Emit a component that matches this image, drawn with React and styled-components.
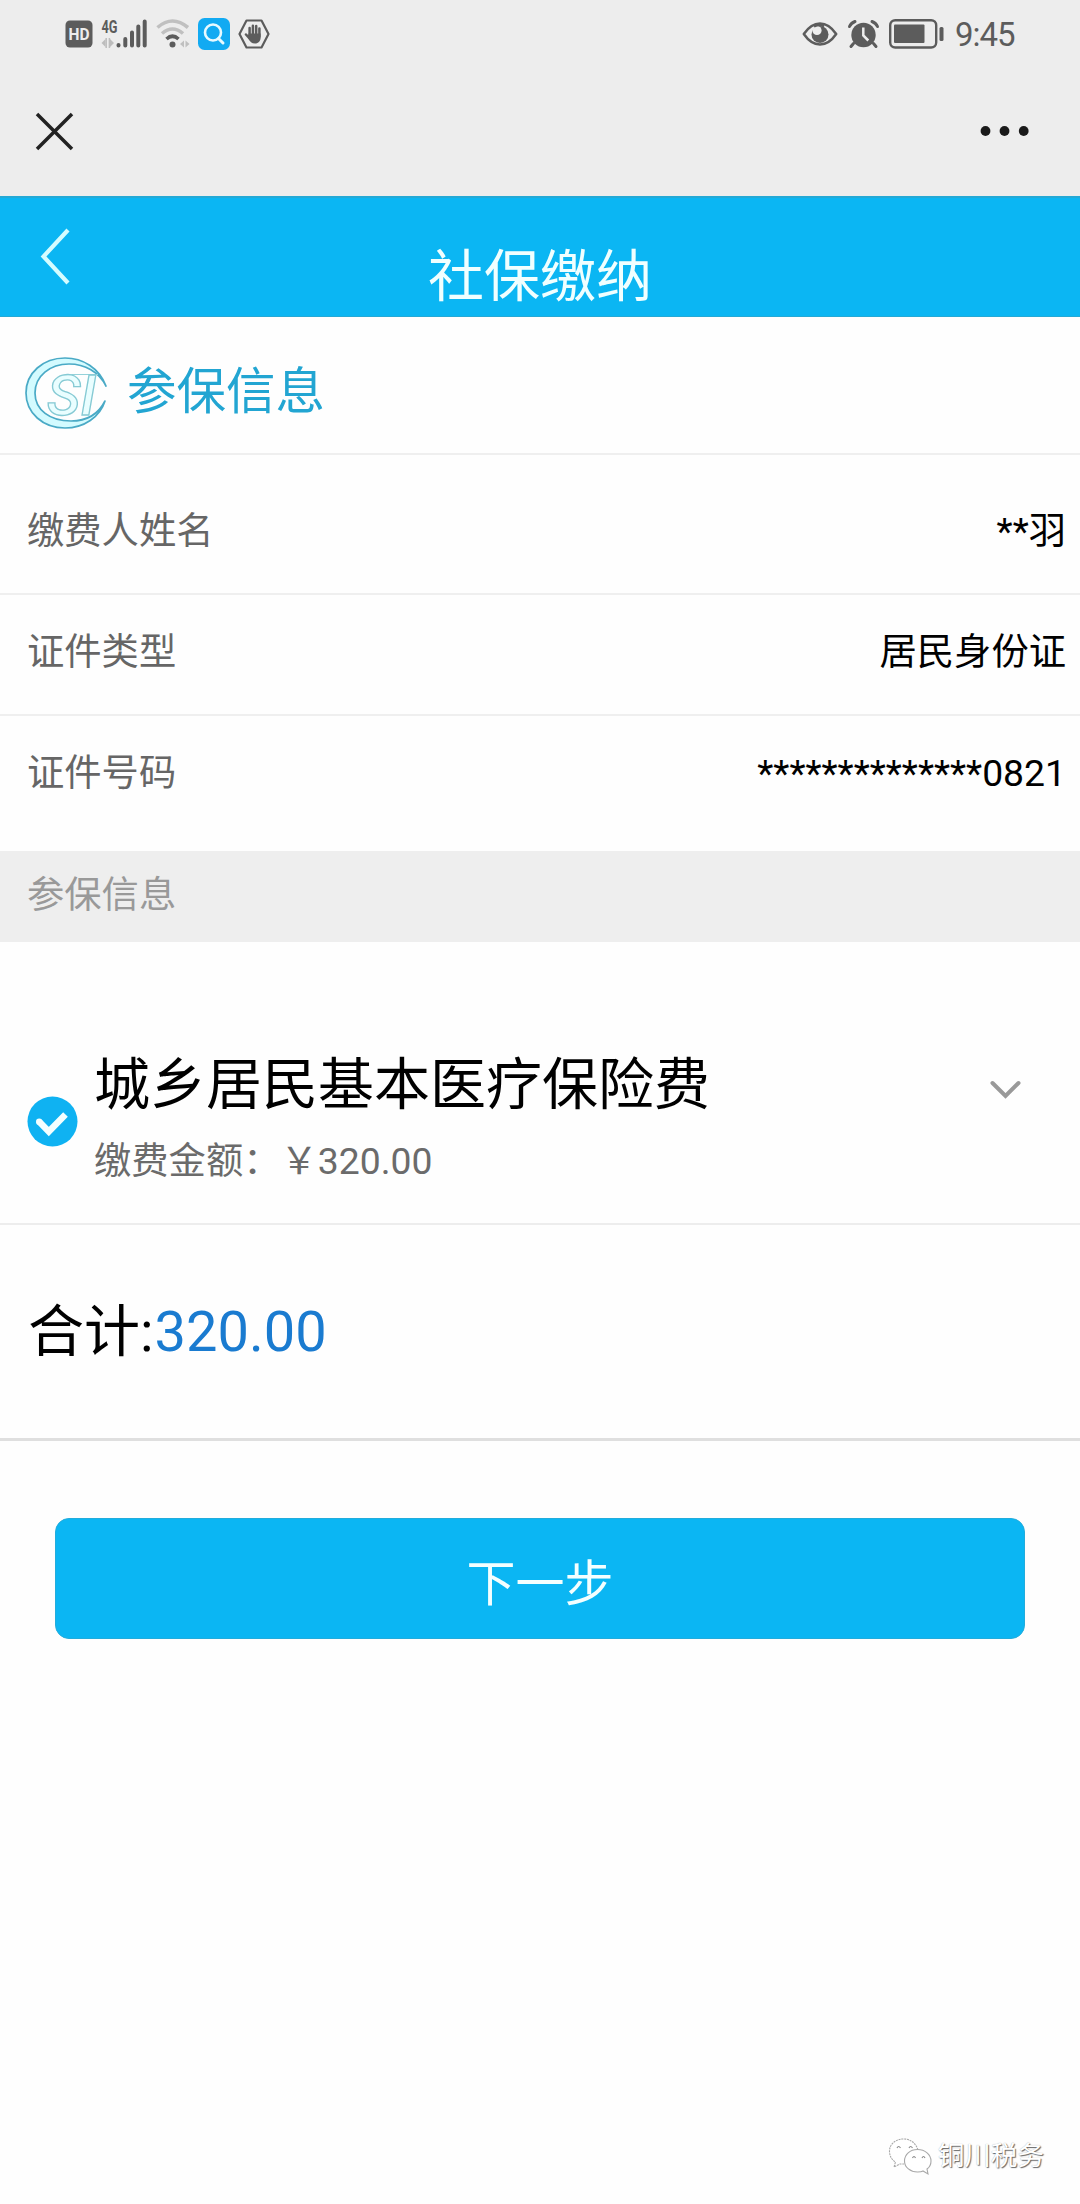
import React, { useState } from "react";
import styled, { createGlobalStyle } from "styled-components";

const GlobalStyle = createGlobalStyle`
  * {
    box-sizing: border-box;
  }

  body {
    margin: 0;
    background: #fefefe;
    font-family: Roboto, "Noto Sans CJK SC", sans-serif;
  }

  svg {
    display: block;
    flex: none;
    overflow: visible;
  }
`;

const Page = styled.div`
  display: flex;
  flex-direction: column;
  width: 1080px;
  height: 2204px;
  overflow: hidden;
  color: #000;
`;

const StatusBar = styled.div`
  display: flex;
  justify-content: space-between;
  align-items: center;
  height: 66px;
  padding: 1px 65px 0;
  background: #ededed;
`;

const StatusGroup = styled.div`
  display: flex;
  align-items: center;
  gap: ${props => props.$gap};
`;

const Time = styled.span`
  width: 60px;
  margin: 3px 0 0 1px;
  color: #5c5c5c;
  font-size: 33px;
  line-height: 40px;
  letter-spacing: -1px;
  white-space: nowrap;
`;

const NavBar = styled.div`
  display: flex;
  justify-content: space-between;
  height: 130px;
  padding: 46px 51px 0 35px;
  background: #ededed;
`;

const Header = styled.header`
  display: grid;
  grid-template-columns: 120px 1fr 120px;
  height: 121px;
  background: #0bb6f3;
  border-top: 2px solid #25a9d5;
  border-bottom: 1px solid #25a9d5;
`;

const Back = styled.div`
  padding: 29px 0 0 40px;
`;

const Title = styled.h1`
  margin: 0;
  padding-top: 39px;
  color: #f0ffff;
  font-size: 56px;
  font-weight: 400;
  line-height: 80px;
  text-align: center;
`;

const SectionHead = styled.div`
  display: flex;
  align-items: center;
  height: 138px;
  padding: 16px 0 0 24px;
  gap: 18px;
  border-bottom: 2px solid #efefef;
`;

const SectionTitle = styled.h2`
  margin: 0 0 2px;
  color: #22a5d2;
  font-size: 49.5px;
  font-weight: 400;
  line-height: 60px;
`;

const Row = styled.div`
  display: flex;
  justify-content: space-between;
  height: ${props => props.$height};
  padding: ${props => props.$top} 14px 0 27px;
  font-size: 37.3px;
  line-height: 50px;
  border-bottom: ${props => (props.$last ? "none" : "2px solid #efefef")};
`;

const Label = styled.span`
  color: #666;
`;

const GroupLabel = styled.div`
  height: 91px;
  padding: 19px 27px 0;
  background: #eee;
  color: #999;
  font-size: 37.3px;
  line-height: 50px;
`;

const Item = styled.div`
  display: flex;
  height: 283px;
  padding-left: 27px;
  border-bottom: 2px solid #ededed;
`;

const Check = styled.div`
  padding-top: 154px;
`;

const ItemText = styled.div`
  flex: 1;
  padding: 107px 0 0 16px;
`;

const ItemName = styled.div`
  font-size: 56px;
  line-height: 72px;
`;

const ItemAmount = styled.div`
  margin-top: 15px;
  color: #6b6b6b;
  font-size: 37.3px;
  line-height: 50px;
`;

const Toggle = styled.div`
  padding: 138px 59px 0 0;
`;

const Total = styled.div`
  height: 216px;
  padding: 67px 28px 0;
  font-size: 56px;
  line-height: 80px;
  border-bottom: 3px solid #dfdfdf;
`;

const Amount = styled.span`
  margin-left: 1px;
  color: #1a7bd0;
`;

const NextButton = styled.button`
  height: 121px;
  margin: 77px 55px 0;
  padding: 12px 0 0;
  background: #0bb6f3;
  border: 1px solid #22acdc;
  border-radius: 14px;
  color: #f4ffff;
  font-family: inherit;
  font-size: 49px;
  line-height: 107px;
`;

const Watermark = styled.footer`
  display: flex;
  align-items: center;
  justify-content: flex-end;
  gap: 6px;
  margin: auto 36px 28px 0;
  color: #fff;
  font-size: 26.6px;
  line-height: 40px;
  text-shadow: 1px 1px 1px #666, 0 0 1px #aaa;
`;

const HdIcon = () => (
  <svg width="28" height="28" viewBox="0 0 28 28">
    <rect x="0.5" y="0.5" width="27" height="27" rx="4.5" fill="#5c5c5c" />
    <text
      x="14"
      y="20"
      textAnchor="middle"
      textLength="21"
      lengthAdjust="spacingAndGlyphs"
      fontFamily="Roboto"
      fontWeight="700"
      fontSize="17"
      fill="#ededed"
    >
      HD
    </text>
  </svg>
);

const SignalIcon = () => (
  <svg width="47" height="30" viewBox="0 0 47 30">
    <text
      x="0.5"
      y="13.5"
      textLength="16"
      lengthAdjust="spacingAndGlyphs"
      fontFamily="Roboto"
      fontWeight="700"
      fontSize="17.5"
      fill="#5c5c5c"
    >
      4G
    </text>
    <path d="M0.500 24l4-4v8zM13 24l-4-4v8z" fill="#bdbdbd" />
    <path d="M5.200 19v10M8.400 19v10" stroke="#bdbdbd" strokeWidth="1.500" />
    <g stroke="#5c5c5c" strokeWidth="4" strokeLinecap="round">
      <path d="M17.500 26v0.500M24.300 20v6.500M31 13.500v13M37.300 7.500v19M43.700 2.500v24" />
    </g>
  </svg>
);

const WifiIcon = () => (
  <svg width="34" height="30" viewBox="0 0 34 30">
    <g fill="none" strokeWidth="3.600">
      <path d="M1.500 8.500Q16.500-4.500 32 8.500" stroke="#c0c0c0" />
      <path d="M6 14.500Q16.500 5.500 27 14.500" stroke="#c0c0c0" />
      <path d="M10.500 20Q16.500 14.500 22.500 20" stroke="#5c5c5c" />
    </g>
    <circle cx="16.500" cy="25.500" r="3" fill="#5c5c5c" />
    <path d="M28 21.500v7l-4-3.500zM29.500 21.500v7l4-3.500z" fill="#c0c0c0" />
  </svg>
);

const SearchIcon = () => (
  <svg width="32" height="32" viewBox="0 0 32 32">
    <rect width="32" height="32" rx="6.500" fill="#12aaf2" />
    <circle cx="15" cy="14.500" r="8" fill="none" stroke="#e8faff" strokeWidth="2.600" />
    <path d="M20.500 20.500l4.500 4.500" stroke="#e8faff" strokeWidth="3" strokeLinecap="round" />
  </svg>
);

const HandIcon = () => (
  <svg width="32" height="30" viewBox="0 0 32 30">
    <path
      d="M8.500 1.500h15L30.500 15l-7 13.500h-15L1.500 15z"
      fill="none"
      stroke="#5c5c5c"
      strokeWidth="2.200"
      strokeLinejoin="round"
    />
    <path
      d="M11.600 9v8M14.900 6.700v10M18.200 7v10M21.400 9.500v8M8 15.500l4 4.500"
      stroke="#5c5c5c"
      strokeWidth="2.500"
      strokeLinecap="round"
    />
    <path d="M10.400 14.500h12.200v4c0 3.500-2.200 6-5.600 6s-5-1.500-6.600-5z" fill="#5c5c5c" />
  </svg>
);

const EyeIcon = () => (
  <svg width="36" height="26" viewBox="0 0 36 26">
    <path
      d="M1.800 13Q9 2.500 18 2.500T34.200 13Q27 23.500 18 23.500T1.800 13z"
      fill="none"
      stroke="#5c5c5c"
      strokeWidth="2.500"
      strokeLinejoin="round"
    />
    <circle cx="18" cy="13.500" r="8.500" fill="#5c5c5c" />
    <circle cx="15" cy="9.500" r="4.600" fill="#ededed" />
    <path d="M12 5.500Q18 2.500 22 5.500" stroke="#5c5c5c" strokeWidth="2.500" fill="none" />
  </svg>
);

const AlarmIcon = () => (
  <svg width="31" height="28" viewBox="0 0 31 28">
    <circle cx="15.500" cy="15" r="12.200" fill="#5c5c5c" />
    <path
      d="M1.500 6.500Q3 3 7 1.500M29.500 6.500Q28 3 24 1.500M5.500 23.500l-2.500 3M25.500 23.500l2.500 3"
      stroke="#5c5c5c"
      strokeWidth="3"
      strokeLinecap="round"
      fill="none"
    />
    <path d="M15.300 7.500v8l5 5" stroke="#ededed" strokeWidth="2.500" fill="none" />
  </svg>
);

const BatteryIcon = () => (
  <svg width="55" height="30" viewBox="0 0 55 30">
    <rect x="1.200" y="1.200" width="46" height="27.300" rx="5" fill="none" stroke="#5c5c5c" strokeWidth="2.400" />
    <rect x="5" y="5.500" width="30.500" height="18.500" rx="1" fill="#5c5c5c" />
    <rect x="50.500" y="8" width="4" height="14" rx="1.500" fill="#5c5c5c" />
  </svg>
);

const CloseIcon = () => (
  <svg width="39" height="39" viewBox="0 0 39 39">
    <path d="M2 2l35 35M37 2l-35 35" stroke="#222" strokeWidth="3.500" />
  </svg>
);

const MoreIcon = () => (
  <svg width="50" height="39" viewBox="0 0 50 39">
    <g fill="#1a1a1a">
      <circle cx="6.500" cy="19" r="4.900" />
      <circle cx="25.500" cy="19" r="4.900" />
      <circle cx="44.700" cy="19" r="4.900" />
    </g>
  </svg>
);

const BackIcon = () => (
  <svg width="30" height="60" viewBox="0 0 30 60">
    <path d="M28 3L3.500 29.500l24.500 26.500" fill="none" stroke="#d4fcff" strokeWidth="4.200" />
  </svg>
);

const LogoIcon = () => (
  <svg width="85" height="74" viewBox="0 0 85 74">
    <path
      d="M82 30C75 12 59 2 41 2C19 2 2 17 2 37s17 35 39 35c19 0 35-11 40-27C74 59 61 65 47 65C26 65 11 54 11 37S26 8 45 8C61 8 75 16 82 30z"
      fill="#d3fbff"
      stroke="#4aaac6"
      strokeWidth="1.700"
      strokeLinejoin="round"
    />
    <path d="M41 18.500h33" stroke="#95d2da" strokeWidth="1.200" />
    <text
      x="23"
      y="59"
      textLength="49"
      lengthAdjust="spacingAndGlyphs"
      fontFamily="Roboto"
      fontStyle="italic"
      fontWeight="500"
      fontSize="55"
      fill="#e9feff"
      stroke="#86cad4"
      strokeWidth="1.300"
    >
      SI
    </text>
  </svg>
);

const CheckIcon = () => (
  <svg width="51" height="51" viewBox="0 0 51 51">
    <circle cx="25.500" cy="25.500" r="25" fill="#0fb2f2" />
    <path
      d="M12.500 26l9.300 9.500L38.500 18.500"
      fill="none"
      stroke="#f4ffff"
      strokeWidth="6.500"
    />
    <circle cx="12.200" cy="25.700" r="3.200" fill="#f4ffff" />
  </svg>
);

const ChevronIcon = ({ open }) => (
  <svg width="31" height="20" viewBox="0 0 31 20">
    <path
      d={open ? "M2.500 16.500L15.500 3L29 16.500" : "M2.500 3L15.500 16L28.500 3"}
      fill="none"
      stroke="#999"
      strokeWidth="4"
      strokeLinecap="round"
    />
  </svg>
);

const WechatIcon = () => (
  <svg width="44" height="40" viewBox="0 0 44 40">
    <g fill="#fff" stroke="#a8a8a8" strokeWidth="1.100">
      <path
        d="M30 14C27 5 20 2.500 14 3C6 4 1.500 9 1.500 15c0 5 2 8.500 6 11l-1.500 5 6-3h5"
        strokeDasharray="2 0.800"
      />
      <path d="M29.500 13.500c-7.500 0-13 5-13 11.500s6 11 13 11c2 0 4 0 5.500-1l5 3-1-5c3-2 4-5 4-8 0-6.500-6-11.500-13.500-11.500z" />
    </g>
    <g fill="none" stroke="#8c8c8c" strokeWidth="1.200">
      <path d="M9 12q1.500-3 3.500 0M21 12q1.500-3 3.500 0M24.500 22q1.500-3 3 0M34 22q1.500-3 3 0" />
    </g>
  </svg>
);

const fields = [
  { name: "缴费人姓名", value: "**羽", height: "140px", top: "51px" },
  { name: "证件类型", value: "居民身份证", height: "121px", top: "32px" },
  { name: "证件号码", value: "**************0821", height: "135px", top: "32px" }
];

const App = () => {
  const [open, setOpen] = useState(false);

  return (
    <Page>
      <GlobalStyle />
      <StatusBar>
        <StatusGroup $gap="8px">
          <HdIcon />
          <SignalIcon />
          <WifiIcon />
          <SearchIcon />
          <HandIcon />
        </StatusGroup>
        <StatusGroup $gap="10px">
          <EyeIcon />
          <AlarmIcon />
          <BatteryIcon />
          <Time>9:45</Time>
        </StatusGroup>
      </StatusBar>
      <NavBar>
        <CloseIcon />
        <MoreIcon />
      </NavBar>
      <Header>
        <Back>
          <BackIcon />
        </Back>
        <Title>社保缴纳</Title>
      </Header>
      <SectionHead>
        <LogoIcon />
        <SectionTitle>参保信息</SectionTitle>
      </SectionHead>
      {fields.map((field, i) => (
        <Row
          key={field.name}
          $height={field.height}
          $top={field.top}
          $last={i === fields.length - 1}
        >
          <Label>{field.name}</Label>
          <span>{field.value}</span>
        </Row>
      ))}
      <GroupLabel>参保信息</GroupLabel>
      <Item>
        <Check>
          <CheckIcon />
        </Check>
        <ItemText>
          <ItemName>城乡居民基本医疗保险费</ItemName>
          <ItemAmount>缴费金额：￥320.00</ItemAmount>
        </ItemText>
        <Toggle onClick={() => setOpen(!open)}>
          <ChevronIcon open={open} />
        </Toggle>
      </Item>
      <Total>
        合计:<Amount>320.00</Amount>
      </Total>
      <NextButton>下一步</NextButton>
      <Watermark>
        <WechatIcon />
        铜川税务
      </Watermark>
    </Page>
  );
};

export default App;
